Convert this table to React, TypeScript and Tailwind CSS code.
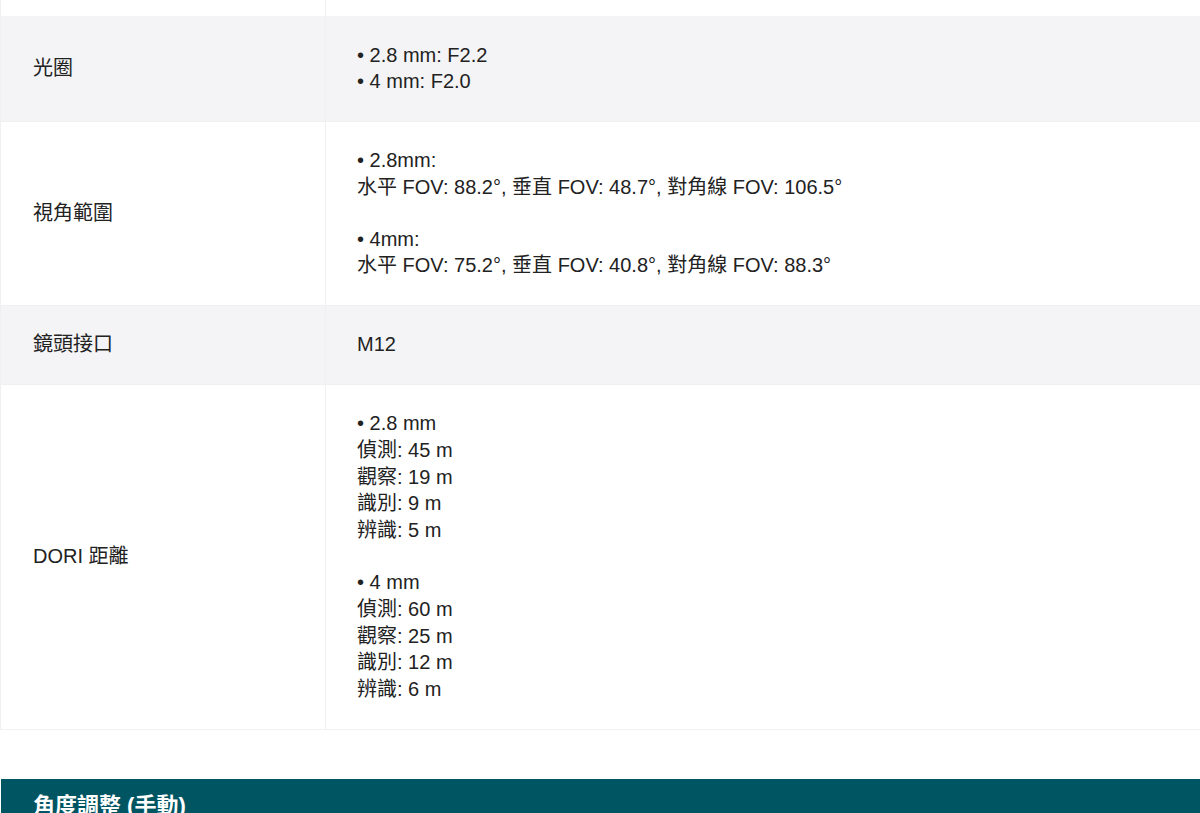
const rows: { label: string; bg: string; lines: string[] }[] = [
  { label: "光圈", bg: "bg-[#f4f4f6]", lines: ["• 2.8 mm: F2.2", "• 4 mm: F2.0"] },
  {
    label: "視角範圍",
    bg: "bg-white",
    lines: [
      "• 2.8mm:",
      "水平 FOV: 88.2°, 垂直 FOV: 48.7°, 對角線 FOV: 106.5°",
      "",
      "• 4mm:",
      "水平 FOV: 75.2°, 垂直 FOV: 40.8°, 對角線 FOV: 88.3°",
    ],
  },
  { label: "鏡頭接口", bg: "bg-[#f4f4f6]", lines: ["M12"] },
  {
    label: "DORI 距離",
    bg: "bg-white",
    lines: [
      "• 2.8 mm",
      "偵測: 45 m",
      "觀察: 19 m",
      "識別: 9 m",
      "辨識: 5 m",
      "",
      "• 4 mm",
      "偵測: 60 m",
      "觀察: 25 m",
      "識別: 12 m",
      "辨識: 6 m",
    ],
  },
];

export default function App() {
  return (
    <div
      className="min-h-[813px] bg-white text-[#222] overflow-hidden"
      style={{ fontFamily: '"Liberation Sans", Arial, "Noto Sans CJK TC", sans-serif' }}
    >
      <div className="border-l border-[#f0f0f0]">
        <div className="grid grid-cols-[325px_1fr] h-[16px]">
          <div className="border-r border-[#f0f0f0]" />
          <div />
        </div>
        {rows.map((row) => (
          <div
            key={row.label}
            className={`grid grid-cols-[325px_1fr] border-b border-[#f0f0f0] ${row.bg}`}
          >
            <div className="flex items-center px-[32px] border-r border-[#f0f0f0] text-[20px] leading-[27px]">
              {row.label}
            </div>
            <div className="px-[31px] py-[25.5px] text-[20px] leading-[26.8px]">
              {row.lines.map((line, i) =>
                line === "" ? (
                  <div key={i} className="h-[25px]" />
                ) : (
                  <div key={i} className="h-[26.8px] whitespace-nowrap">
                    {line}
                  </div>
                )
              )}
            </div>
          </div>
        ))}
      </div>

      <div className="mt-[49px] ml-px bg-[#005563] px-[32px] pt-[12px] pb-[12px]">
        <h2 className="text-white text-[22px] font-bold leading-[30px]">角度調整 (手動)</h2>
      </div>
    </div>
  );
}
